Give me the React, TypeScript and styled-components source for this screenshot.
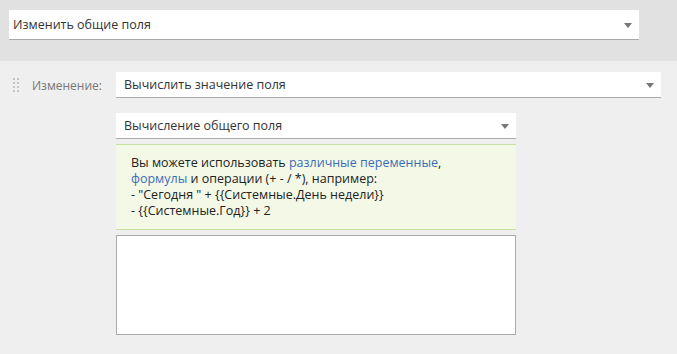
import styled, { createGlobalStyle } from "styled-components";

const Global = createGlobalStyle`
  html, body {
    margin: 0;
    padding: 0;
    background: #efefef;
    font-family: "Open Sans", "Noto Sans", sans-serif;
    font-size: 12.5px;
    color: #333;
  }
`;

const Page = styled.div`
  width: 677px;
  height: 354px;
  overflow: hidden;
  background: #efefef;
`;

const Band = styled.div`
  background: #e1e1e1;
  height: 61px;
  box-sizing: border-box;
  padding: 10px 38px 0 9px;
`;

const Select = styled.div<{ $height: number }>`
  box-sizing: border-box;
  width: 100%;
  height: ${(p) => p.$height}px;
  background: #fff;
  border-bottom: 1px solid #aaa;
  display: flex;
  align-items: center;
  justify-content: space-between;
  padding: 0 7px 0 ${(p) => (p.$height > 28 ? 4 : 8)}px;
  font-size: 12.5px;
  color: #333;
`;

const Arrow = styled.span`
  width: 0;
  height: 0;
  border-left: 4px solid transparent;
  border-right: 4px solid transparent;
  border-top: 5px solid #777;
  margin-top: 1px;
`;

const Body = styled.div`
  display: grid;
  grid-template-columns: 116px 1fr;
  padding: 11px 16px 0 0;
  row-gap: 15px;
`;

const LabelCell = styled.div`
  display: flex;
  align-items: center;
  height: 26px;
  padding-left: 13px;
`;

const Handle = styled.div`
  display: grid;
  grid-template-columns: 2px 2px;
  grid-auto-rows: 2px;
  column-gap: 2px;
  row-gap: 2px;
  margin-right: 13px;
  span {
    background: #c4c4c4;
  }
`;

const Label = styled.span`
  color: #777;
  font-size: 12px;
`;

const Column = styled.div`
  grid-column: 2;
  width: 400px;
  display: flex;
  flex-direction: column;
`;

const Hint = styled.div`
  margin-top: 5px;
  box-sizing: border-box;
  height: 86px;
  background: #f4f9e7;
  border-top: 1px solid #c6e0a0;
  border-bottom: 1px solid #c6e0a0;
  padding: 10px 15px 0;
  line-height: 16px;
  font-size: 12.5px;
  color: #222;
  a {
    color: #3c6db5;
    text-decoration: none;
  }
`;

const Area = styled.textarea`
  margin-top: 5px;
  box-sizing: border-box;
  width: 400px;
  height: 100px;
  border: 1px solid #a9a9a9;
  background: #fff;
  resize: none;
  outline: none;
  font-family: inherit;
`;

export default function App() {
  return (
    <Page>
      <Global />
      <Band>
        <Select $height={30}>
          <span>Изменить общие поля</span>
          <Arrow />
        </Select>
      </Band>
      <Body>
        <LabelCell>
          <Handle>
            {Array.from({ length: 8 }).map((_, i) => (
              <span key={i} />
            ))}
          </Handle>
          <Label>Изменение:</Label>
        </LabelCell>
        <Select $height={26}>
          <span>Вычислить значение поля</span>
          <Arrow />
        </Select>
        <Column>
          <Select $height={26}>
            <span>Вычисление общего поля</span>
            <Arrow />
          </Select>
          <Hint>
            Вы можете использовать <a href="#">различные переменные</a>,
            <br />
            <a href="#">формулы</a> и операции (+ - / *), например:
            <br />- "Сегодня " + {"{{Системные.День недели}}"}
            <br />- {"{{Системные.Год}}"} + 2
          </Hint>
          <Area />
        </Column>
      </Body>
    </Page>
  );
}
